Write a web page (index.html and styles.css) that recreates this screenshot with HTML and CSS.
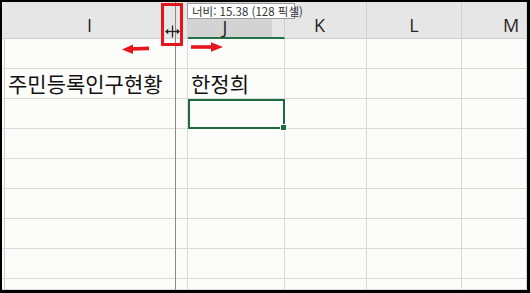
FILE: index.html
```html
<!DOCTYPE html>
<html lang="ko">
<head>
    <meta charset="UTF-8">
    <meta name="viewport" content="width=device-width, initial-scale=1.0">
    <title>열 너비 조정</title>
    <link rel="stylesheet" href="styles.css">
</head>
<body>
    <div class="screen">
        <div class="sheet">
            <!-- column headers -->
            <div class="col-head edge"></div>
            <div class="col-head col-i">I</div>
            <div class="col-head col-j active">J</div>
            <div class="col-head col-k">K</div>
            <div class="col-head col-l">L</div>
            <div class="col-head col-m">M</div>

            <!-- row 1 -->
            <div class="cell edge"></div><div class="cell"></div><div class="cell"></div><div class="cell"></div><div class="cell"></div><div class="cell"></div>
            <!-- row 2 -->
            <div class="cell edge"></div><div class="cell text">주민등록인구현황</div><div class="cell text">한정희</div><div class="cell"></div><div class="cell"></div><div class="cell"></div>
            <!-- row 3 -->
            <div class="cell edge"></div><div class="cell"></div><div class="cell selected"></div><div class="cell"></div><div class="cell"></div><div class="cell"></div>
            <!-- row 4 -->
            <div class="cell edge"></div><div class="cell"></div><div class="cell"></div><div class="cell"></div><div class="cell"></div><div class="cell"></div>
            <!-- row 5 -->
            <div class="cell edge"></div><div class="cell"></div><div class="cell"></div><div class="cell"></div><div class="cell"></div><div class="cell"></div>
            <!-- row 6 -->
            <div class="cell edge"></div><div class="cell"></div><div class="cell"></div><div class="cell"></div><div class="cell"></div><div class="cell"></div>
            <!-- row 7 -->
            <div class="cell edge"></div><div class="cell"></div><div class="cell"></div><div class="cell"></div><div class="cell"></div><div class="cell"></div>
            <!-- row 8 -->
            <div class="cell edge"></div><div class="cell"></div><div class="cell"></div><div class="cell"></div><div class="cell"></div><div class="cell"></div>
            <!-- row 9 (cut off) -->
            <div class="cell edge"></div><div class="cell"></div><div class="cell"></div><div class="cell"></div><div class="cell"></div><div class="cell"></div>
        </div>

        <!-- resize overlay -->
        <div class="drag-line"></div>
        <div class="resize-box">
            <svg class="resize-cursor" width="15" height="13" viewBox="0 0 15 13">
                <line x1="7.5" y1="0.5" x2="7.5" y2="12.5" stroke="#222" stroke-width="1.3"/>
                <line x1="1" y1="6.5" x2="14" y2="6.5" stroke="#222" stroke-width="1.3"/>
                <polygon points="0,6.5 3.2,3.8 3.2,9.2" fill="#222"/>
                <polygon points="15,6.5 11.8,3.8 11.8,9.2" fill="#222"/>
            </svg>
        </div>
        <div class="tooltip">너비: 15.38 (128 픽셀)</div>

        <svg class="arrow arrow-left" width="28" height="10" viewBox="0 0 28 10">
            <line x1="8" y1="5" x2="27" y2="4.4" stroke="#e8161c" stroke-width="3.6"/>
            <polygon points="0,5.4 11,0.4 11,10" fill="#e8161c"/>
        </svg>
        <svg class="arrow arrow-right" width="32" height="10" viewBox="0 0 32 10">
            <line x1="0" y1="5" x2="22" y2="5" stroke="#e8161c" stroke-width="3.6"/>
            <polygon points="32,5 20,0.2 20,9.8" fill="#e8161c"/>
        </svg>
    </div>
</body>
</html>
```

FILE: styles.css
```css
* {
    margin: 0;
    padding: 0;
    box-sizing: border-box;
}

body {
    background-color: #000;
    font-family: 'Noto Sans CJK KR', 'Noto Sans', sans-serif;
}

/* Screenshot frame */
.screen {
    position: relative;
    width: 530px;
    height: 293px;
    border-style: solid;
    border-color: #000;
    border-width: 2px 3px 3px 2px;
    background-color: #fcfcfa;
    overflow: hidden;
}

/* Spreadsheet grid */
.sheet {
    display: grid;
    grid-template-columns: 3px 183px 97px 82px 95px 65px;
    grid-template-rows: 37px repeat(8, 30px) 11px;
    height: 100%;
}

.col-head {
    display: flex;
    justify-content: center;
    align-items: center;
    padding-top: 9px;
    background-color: #e6e6e6;
    border-right: 1px solid #d0d0d0;
    border-bottom: 1px solid #cfcfcf;
    font-family: 'Open Sans', 'Noto Sans', sans-serif;
    font-size: 18px;
    line-height: 16px;
    color: #262626;
}

.col-head.edge {
    border-right: none;
}

.col-i {
    padding-right: 13px;
}

.col-j {
    padding-top: 15px;
    padding-right: 22px;
}

.col-k {
    padding-right: 12px;
}

.col-m {
    padding-left: 34px;
}

/* highlighted column header while resizing */
.col-head.active {
    background: linear-gradient(to right, #d3d3d3 84px, #e6e6e6 84px);
    border-bottom: 2px solid #217346;
}

.cell {
    border-right: 1px solid #d9d9d9;
    border-bottom: 1px solid #d9d9d9;
}

.cell.edge {
    border-right: 1px solid #cfcfcf;
}

.cell.text {
    display: flex;
    align-items: flex-end;
    padding-left: 3px;
    padding-bottom: 1px;
    font-size: 21px;
    line-height: 28px;
    color: #111;
    white-space: nowrap;
}

.cell.selected {
    position: relative;
    border: 2px solid #1e6b40;
}

.cell.selected::after {
    content: "";
    position: absolute;
    right: -4px;
    bottom: -4px;
    width: 5px;
    height: 5px;
    background-color: #1e6b40;
    border: 1px solid #fff;
}

/* Resize overlay */
.drag-line {
    position: absolute;
    left: 173px;
    top: 0;
    bottom: 0;
    width: 1px;
    background-color: #8a8a8a;
}

.resize-box {
    position: absolute;
    left: 159px;
    top: 1px;
    width: 22px;
    height: 43px;
    border: 3px solid #e3161d;
}

.resize-cursor {
    position: absolute;
    left: 1px;
    top: 19px;
}

.tooltip {
    position: absolute;
    left: 185px;
    top: 1px;
    width: 108px;
    height: 16px;
    padding-left: 4px;
    background-color: #fff;
    border: 1px solid #9a9a9a;
    font-size: 11.5px;
    line-height: 14px;
    color: #333;
    white-space: nowrap;
}

.arrow {
    position: absolute;
}

.arrow-left {
    left: 120px;
    top: 42px;
}

.arrow-right {
    left: 189px;
    top: 40px;
}
```
